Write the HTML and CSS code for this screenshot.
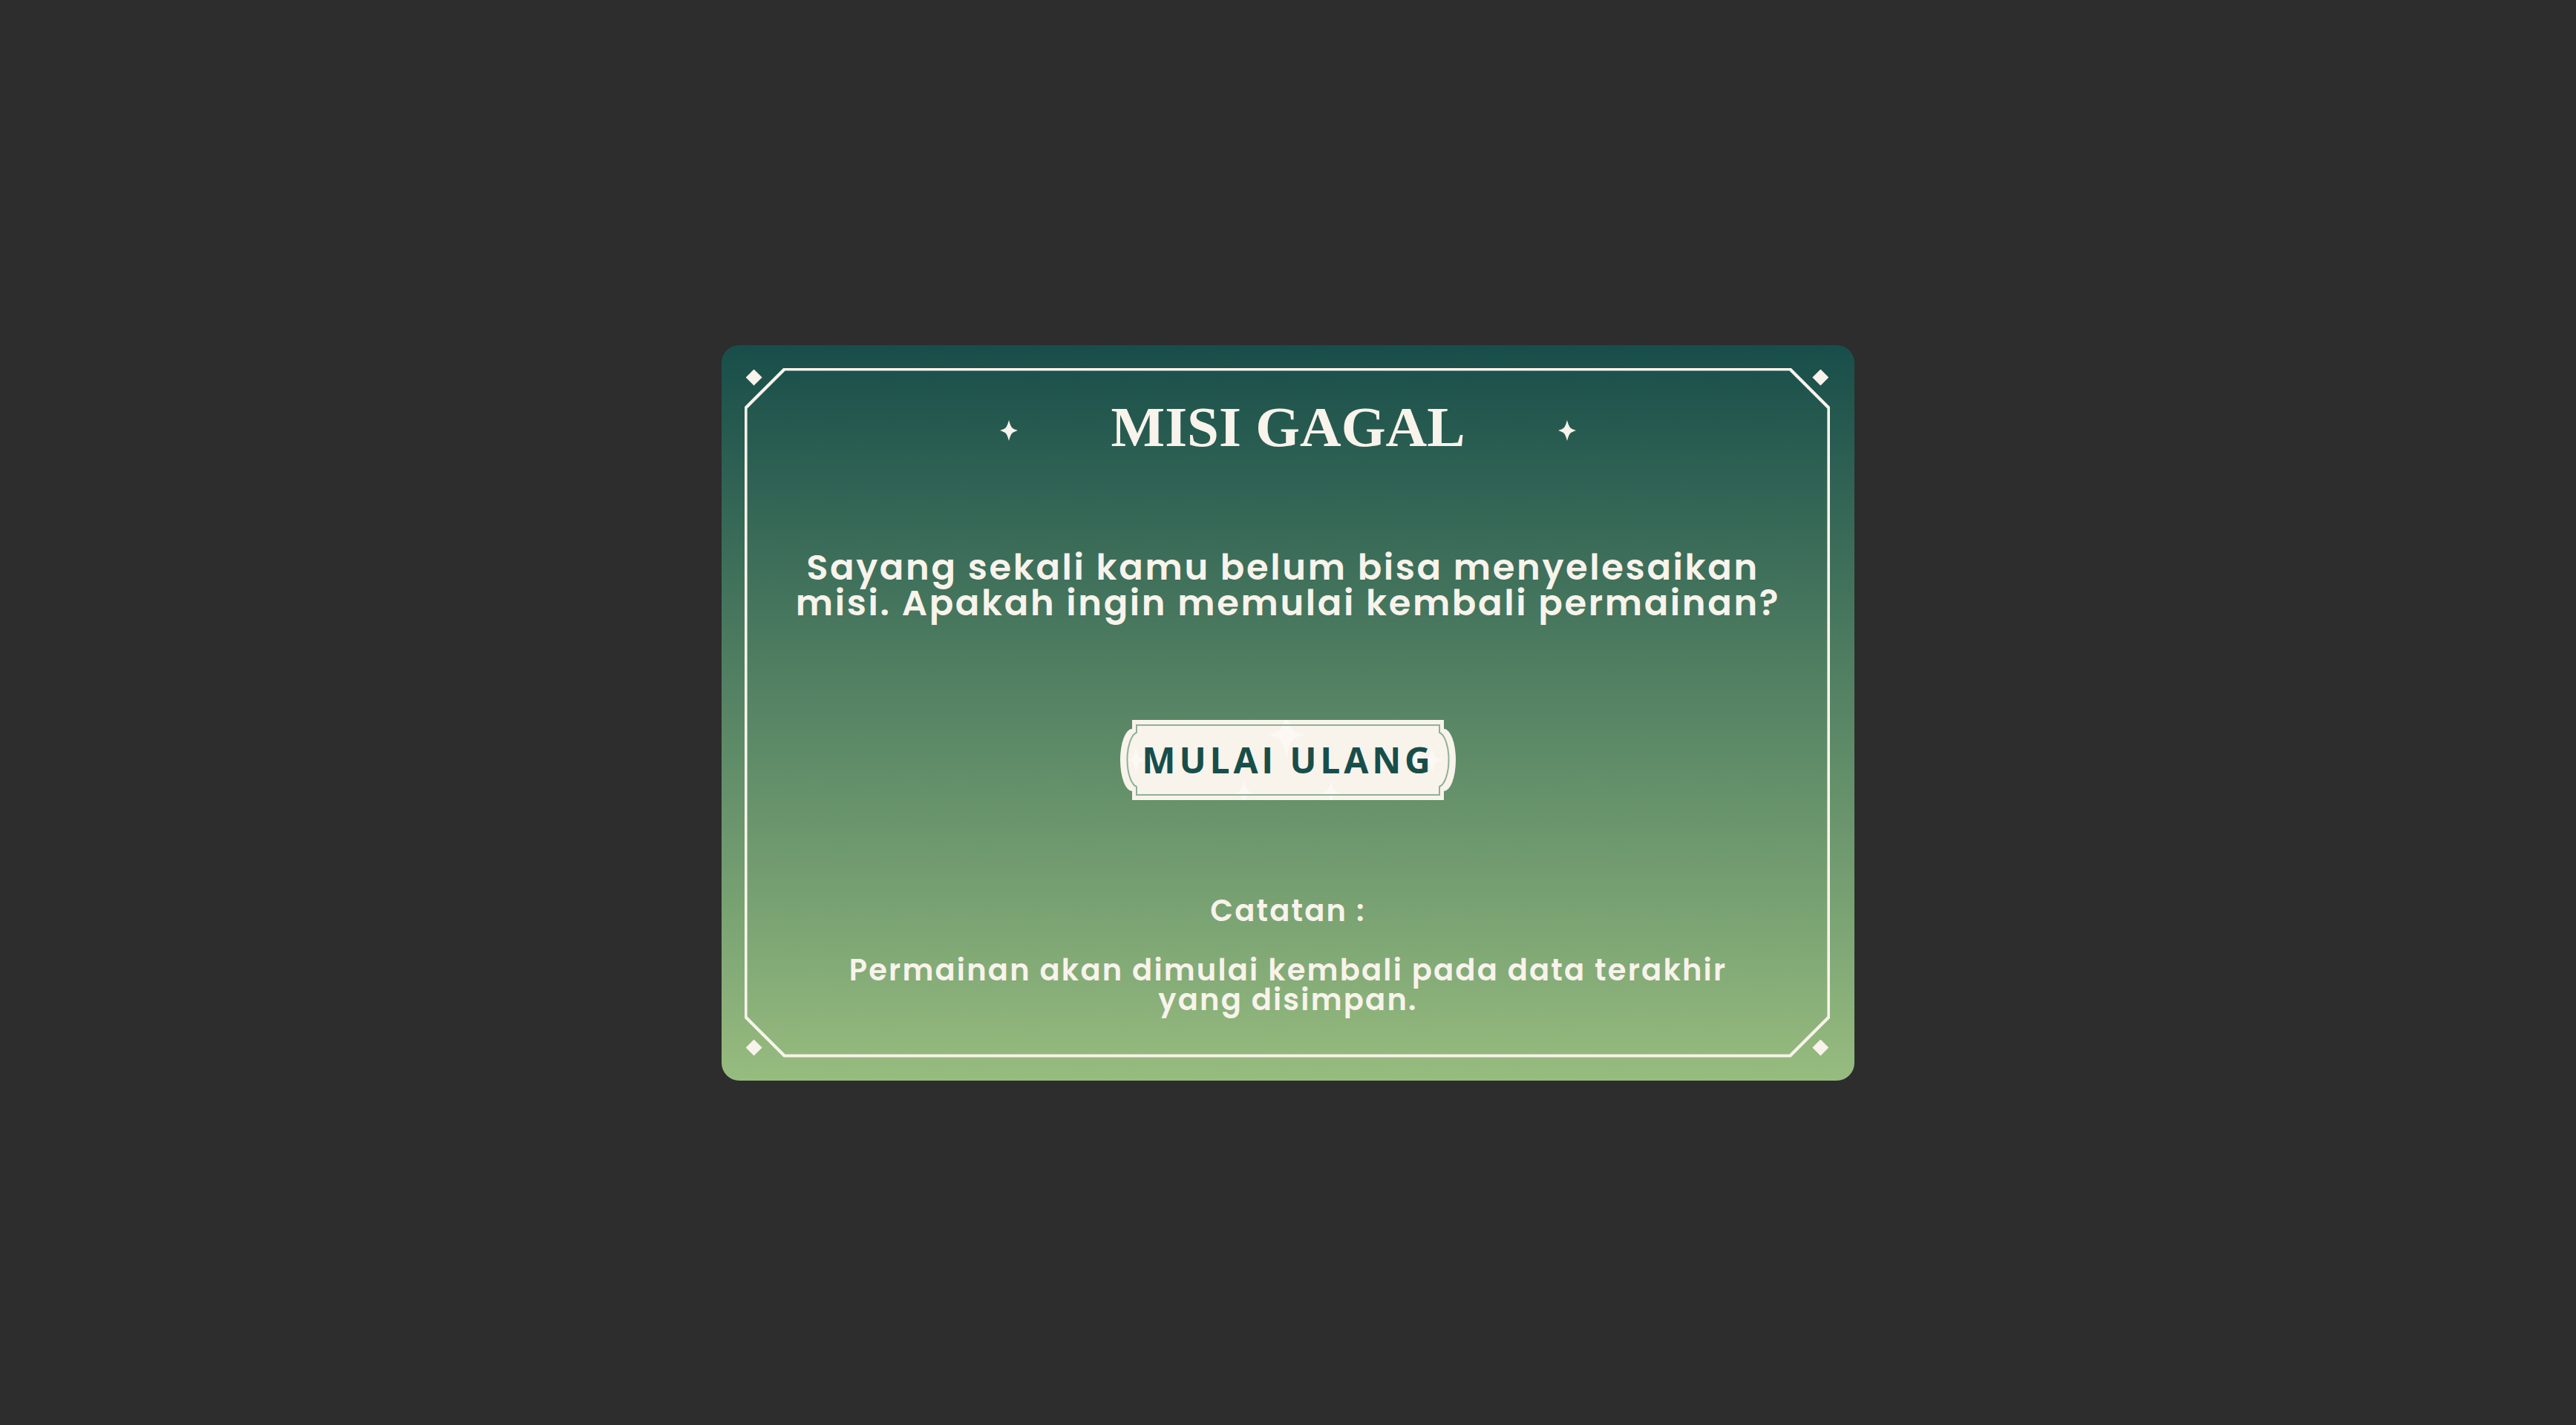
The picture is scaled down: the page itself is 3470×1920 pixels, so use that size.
FILE: index.html
```html
<!DOCTYPE html>
<html lang="id">
<head>
<meta charset="utf-8">
<meta name="viewport" content="width=device-width, initial-scale=1">
<title>Misi Gagal</title>
<link rel="stylesheet" href="styles.css">
</head>
<body>
<main class="card">
  <div class="frame" aria-hidden="true"></div>
  <span class="diamond diamond-tl"></span>
  <span class="diamond diamond-tr"></span>
  <span class="diamond diamond-bl"></span>
  <span class="diamond diamond-br"></span>

  <header class="heading">
    <svg class="star" viewBox="0 0 24 28" aria-hidden="true"><path d="M12 0Q14 8 16.500 10.500Q18 12 24 14Q18 16 16.500 17.500Q14 20 12 28Q10 20 7.500 17.500Q6 16 0 14Q6 12 7.500 10.500Q10 8 12 0Z"/></svg>
    <h1 class="title">MISI GAGAL</h1>
    <svg class="star" viewBox="0 0 24 28" aria-hidden="true"><path d="M12 0Q14 8 16.500 10.500Q18 12 24 14Q18 16 16.500 17.500Q14 20 12 28Q10 20 7.500 17.500Q6 16 0 14Q6 12 7.500 10.500Q10 8 12 0Z"/></svg>
  </header>

  <p class="message">Sayang sekali kamu belum bisa menyelesaikan misi. Apakah ingin memulai kembali permainan?</p>

  <button class="restart" type="button">
    <svg class="plate" viewBox="0 0 452 108" preserveAspectRatio="none" aria-hidden="true">
      <defs>
        <clipPath id="plate-shape"><path d="M16 0H436V12A16 42 0 0 1 436 96V108H16V96A16 42 0 0 1 16 12Z"/></clipPath>
        <path id="spark" d="M0 -32Q4 -10 9 -6Q14 -2 25 0Q14 2 9 6Q4 10 0 32Q-4 10 -9 6Q-14 2 -25 0Q-14 -2 -9 -6Q-4 -10 0 -32Z"/>
      </defs>
      <g clip-path="url(#plate-shape)">
        <rect class="plate-fill" width="452" height="108"/>
        <g class="plate-sparks">
          <use href="#spark" transform="translate(224 20)"/>
          <use href="#spark" transform="translate(21 54) scale(.54)"/>
          <use href="#spark" transform="translate(42 54) scale(.4 .72)"/>
          <use href="#spark" transform="translate(167 98) scale(.5 .54)"/>
          <use href="#spark" transform="translate(284 98) scale(.5 .54)"/>
          <use href="#spark" transform="translate(400 54) scale(.4 .72)"/>
          <use href="#spark" transform="translate(420 54) scale(.54)"/>
        </g>
      </g>
      <path class="plate-line" d="M22 7H430V17A15 37 0 0 1 430 90V101H22V90A15 37 0 0 1 22 17Z"/>
    </svg>
    <span class="restart-label">MULAI ULANG</span>
  </button>

  <section class="note">
    <h2 class="note-title">Catatan :</h2>
    <p class="note-text">Permainan akan dimulai kembali pada data terakhir yang disimpan.</p>
  </section>
</main>
</body>
</html>
```
FILE: styles.css
```css
:root {
  --cream: #f8f3eb;
  --pine: #184e4a;
  --leaf: #97bc7f;
}

* {
  box-sizing: border-box;
}

body {
  margin: 0;
  min-height: 100vh;
  display: flex;
  align-items: center;
  justify-content: center;
  background: #2d2d2d;
  color: var(--cream);
  font-family: Poppins, Inter, sans-serif;
  font-weight: 600;
}

.card {
  position: relative;
  width: 44%;
  min-width: 900px;
  padding: 70px 80px 89px;
  display: flex;
  flex-direction: column;
  align-items: center;
  border-radius: 24px;
  background: linear-gradient(var(--pine), var(--leaf));
  text-align: center;
}

/* Cream outline with cut corners: outer ring, then inner ring */
.frame {
  position: absolute;
  inset: 31px 33px 31px 31px;
  background: var(--cream);
  clip-path: polygon(evenodd,
    53px 0, calc(100% - 53px) 0, 100% 53px, 100% calc(100% - 53px),
    calc(100% - 53px) 100%, 53px 100%, 0 calc(100% - 53px), 0 53px, 53px 0,
    55px 4px, calc(100% - 55px) 4px, calc(100% - 4px) 55px, calc(100% - 4px) calc(100% - 55px),
    calc(100% - 55px) calc(100% - 4px), 55px calc(100% - 4px), 4px calc(100% - 55px), 4px 55px, 55px 4px);
}

.diamond {
  position: absolute;
  width: 22px;
  height: 22px;
  background: var(--cream);
  clip-path: polygon(50% 0, 100% 50%, 50% 100%, 0 50%);
}

.diamond-tl { top: 33px; left: 33px; }
.diamond-tr { top: 33px; right: 35px; }
.diamond-bl { bottom: 33px; left: 33px; }
.diamond-br { bottom: 33px; right: 35px; }

.heading {
  width: 776px;
  display: flex;
  align-items: center;
  justify-content: space-between;
}

.title {
  margin: 0;
  font-family: "Liberation Serif", serif;
  font-size: 77px;
  font-weight: 700;
  line-height: 80px;
}

.star {
  width: 24px;
  height: 28px;
  margin-top: 10px;
  fill: var(--cream);
}

.message {
  margin: 126px 0 0;
  font-size: 48px;
  line-height: 48px;
  letter-spacing: 0.055em;
  white-space: break-spaces;
}

.restart {
  position: relative;
  margin: 133px 0 129px;
  padding: 22px 28px;
  min-width: 452px;
  border: 0;
  background: none;
  color: var(--pine);
  font-family: "Open Sans", sans-serif;
  font-size: 48px;
  font-weight: 700;
  line-height: 64px;
  letter-spacing: 0.1em;
  cursor: pointer;
}

.plate {
  position: absolute;
  inset: 0;
  width: 100%;
  height: 100%;
}

.plate-fill { fill: var(--cream); }
.plate-sparks { fill: #fcf9f4; }

.plate-line {
  fill: none;
  stroke: #8fb196;
  stroke-width: 2;
}

.restart-label {
  position: relative;
}

.note {
  max-width: 1240px;
  font-size: 40px;
  line-height: 40px;
  letter-spacing: 0.055em;
}

.note-title {
  margin: 0 0 40px;
  font: inherit;
}

.note-text {
  margin: 0;
}
```
